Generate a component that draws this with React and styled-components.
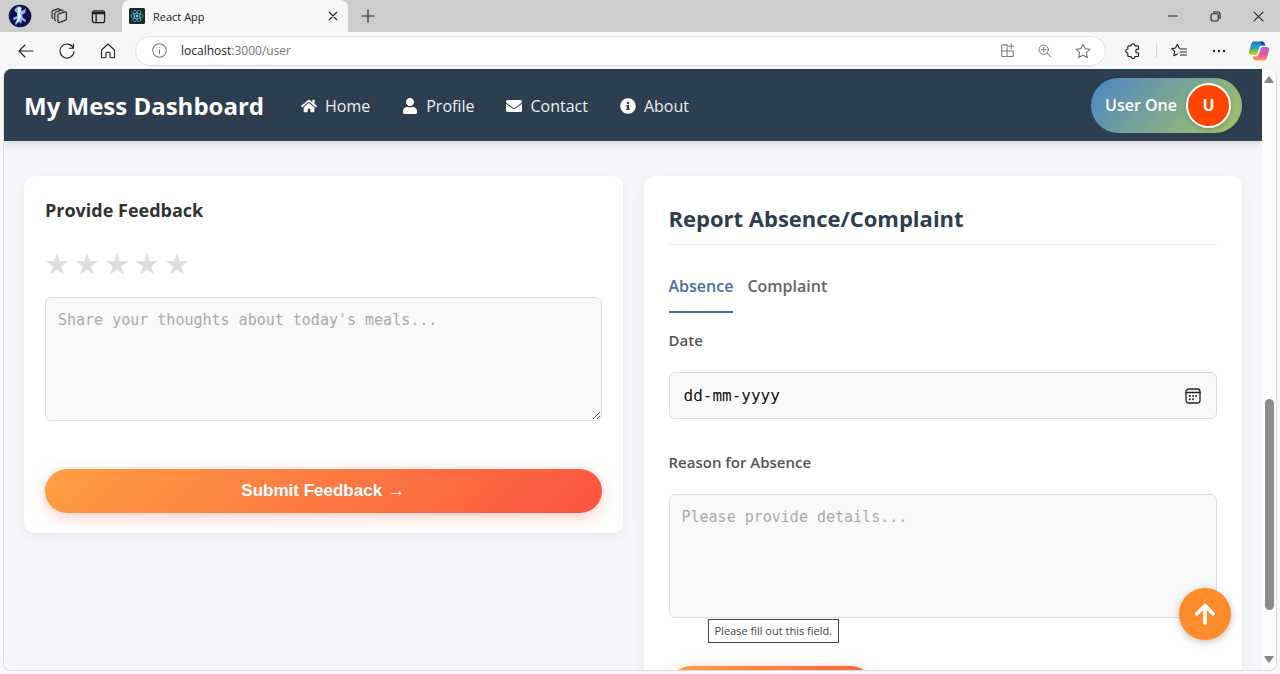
import React from "react";
import styled, { createGlobalStyle } from "styled-components";
import { FaHome, FaUser, FaEnvelope, FaInfoCircle, FaArrowUp } from "react-icons/fa";

const GlobalStyle = createGlobalStyle`
  *, *::before, *::after { box-sizing: border-box; }
  body {
    margin: 0;
    font-family: "Open Sans", "Noto Sans", sans-serif;
    font-size: 16px;
    color: #333;
    background: #f7f7f7;
  }
  button, input, textarea { font: inherit; color: inherit; margin: 0; }
  svg { display: block; flex: none; }
  h1, h2, h3 { margin: 0; }
`;

/* ---------- Browser window ---------- */

const Window = styled.div`
  display: flex;
  flex-direction: column;
  height: 100vh;
  overflow: hidden;
`;

const TabStrip = styled.div`
  display: flex;
  align-items: center;
  height: 32px;
  padding-left: 8px;
  background: #cdcdcd;
`;

const IconButton = styled.button`
  display: grid;
  place-items: center;
  flex: none;
  width: ${(p) => p.$width || 24}px;
  height: 24px;
  padding: 0;
  border: 0;
  background: none;
  color: ${(p) => (p.$muted ? "#777" : "#222")};
`;

const StripTools = styled.div`
  display: flex;
  gap: 15px;
  width: 114px;
  flex: none;
`;

const Tab = styled.div`
  display: flex;
  align-items: center;
  gap: 8px;
  width: 226px;
  height: 32px;
  padding: 0 5px 0 7px;
  border-radius: 8px 8px 0 0;
  background: #f7f7f7;
  font-size: 11px;
  color: #222;
`;

const TabTitle = styled.span`
  flex: 1;
`;

const WindowControls = styled.div`
  display: flex;
  margin-left: auto;
`;

const Toolbar = styled.div`
  display: flex;
  align-items: center;
  height: 37px;
  padding: 0 9px 0 14px;
  background: #f7f7f7;
`;

const ToolGroup = styled.div`
  display: flex;
  gap: 17px;
  margin-right: 15px;
`;

const AddressBar = styled.div`
  display: flex;
  flex: 1;
  align-items: center;
  height: 30px;
  padding: 0 10px 0 11px;
  border: 1px solid #e2e2e2;
  border-radius: 15px;
  background: #fff;
`;

const Address = styled.span`
  flex: 1;
  margin-left: 10px;
  font-size: 12px;
  color: #777;

  b {
    font-weight: 400;
    color: #222;
  }
`;

const AddressActions = styled.div`
  display: flex;
  gap: 14px;
`;

const ToolbarEnd = styled.div`
  display: flex;
  align-items: center;
  margin-left: 11px;
`;

const Divider = styled.span`
  width: 1px;
  height: 15px;
  margin: 0 10px 0 7px;
  background: #d8d8d8;
`;

const Viewport = styled.div`
  position: relative;
  display: flex;
  flex: 1;
  min-height: 0;
  margin: 0 3px 3px;
  border: 1px solid #dcdcdc;
  border-top: 0;
  border-radius: 8px;
  overflow: hidden;
  background: #fcfcfc;
`;

const ScrollTrack = styled.div`
  display: flex;
  flex-direction: column;
  align-items: center;
  width: 14px;
  padding: 7px 0;
  background: #fcfcfc;
`;

const ScrollThumb = styled.div`
  width: 9px;
  height: 36%;
  margin: auto 0 46px;
  border-radius: 5px;
  background: #8b8b8b;
`;

/* ---------- Page ---------- */

const Page = styled.div`
  flex: 1;
  min-width: 0;
  overflow: hidden;
  background: #f5f6fa;
`;

const NavBar = styled.header`
  display: flex;
  align-items: center;
  height: 72px;
  padding: 0 20px;
  background: #2c3e50;
  color: #fff;
  box-shadow: 0 2px 10px rgba(0, 0, 0, 0.15);
`;

const Brand = styled.h1`
  padding-top: 2px;
  font-size: 24px;
  font-weight: 700;
  line-height: 32px;
`;

const NavLinks = styled.nav`
  display: flex;
  gap: 32px;
  margin-left: 37px;
  padding-top: 2px;
`;

const NavLink = styled.a`
  display: flex;
  align-items: center;
  gap: 8px;
  font-size: 16px;
  color: #ecf0f1;
  text-decoration: none;

  svg { color: #fff; }
`;

const UserChip = styled.button`
  display: flex;
  align-items: center;
  gap: 9px;
  height: 55px;
  margin-left: auto;
  padding: 0 11px 0 14px;
  border: 0;
  border-radius: 28px;
  background: linear-gradient(135deg, #4a86c5, #a9c566);
  color: #fff;
  font-size: 16px;
  font-weight: 600;
`;

const Avatar = styled.span`
  display: grid;
  place-items: center;
  width: 45px;
  height: 45px;
  border: 2px solid #fff;
  border-radius: 50%;
  background: #ff4500;
  font-weight: 700;
  box-shadow: 0 2px 5px rgba(0, 0, 0, 0.2);
`;

const Columns = styled.main`
  display: grid;
  grid-template-columns: 1fr 1fr;
  align-items: start;
  gap: 21px;
  padding: 35px 20px 24px;
`;

const Card = styled.form`
  display: flex;
  flex-direction: column;
  align-items: stretch;
  padding: ${(p) => p.$padding};
  border-radius: 10px;
  background: #fff;
  box-shadow: 0 5px 15px rgba(0, 0, 0, 0.05);
`;

const FeedbackTitle = styled.h3`
  font-size: 18px;
  font-weight: 700;
  line-height: 28px;
`;

const Stars = styled.div`
  display: flex;
  gap: 6px;
  margin: 28px 0 21px;
`;

const StarButton = styled.button`
  display: grid;
  place-items: center;
  width: 24px;
  height: 24px;
  padding: 0;
  border: 0;
  background: none;
  color: #ddd;
`;

const TextArea = styled.textarea`
  display: block;
  width: 100%;
  height: 124px;
  padding: 12px;
  border: 1px solid #ddd;
  border-radius: 6px;
  background: #f9f9f9;
  font-family: "DejaVu Sans Mono", monospace;
  font-size: 15px;
  line-height: 20px;
  resize: ${(p) => (p.$resizable ? "vertical" : "none")};

  &::placeholder { color: #aaa; }
`;

const SubmitButton = styled.button`
  display: flex;
  align-items: center;
  justify-content: center;
  gap: 6px;
  width: ${(p) => (p.$compact ? "204px" : "100%")};
  height: 44px;
  margin-top: 48px;
  border: 0;
  border-radius: 22px;
  background: linear-gradient(135deg, #ff9f43, #fa5541);
  box-shadow: 0 4px 15px rgba(255, 87, 66, 0.3);
  color: #fff;
  font-family: "Liberation Sans", Arial, sans-serif;
  font-size: 17px;
  font-weight: 700;
  white-space: nowrap;
`;

const Arrow = styled.span`
  font-weight: 400;
`;

const ReportTitle = styled.h2`
  padding-bottom: 10px;
  border-bottom: 1px solid #eee;
  font-size: 22px;
  font-weight: 700;
  line-height: 32px;
  color: #2c3e50;
`;

const Tabs = styled.div`
  display: flex;
  gap: 14px;
  margin: 16px 0;
`;

const TabButton = styled.button`
  height: 52px;
  padding: 0;
  border: 0;
  border-bottom: 2px solid ${(p) => (p.$active ? "#4a6fa5" : "transparent")};
  background: none;
  color: ${(p) => (p.$active ? "#4a6fa5" : "#666")};
  font-size: 16px;
  font-weight: 600;
`;

const Field = styled.div`
  position: relative;
  display: flex;
  flex-direction: column;
  gap: 21px;
  margin-bottom: ${(p) => (p.$last ? 0 : 32)}px;
`;

const Label = styled.label`
  font-size: 15px;
  font-weight: 600;
  line-height: 22px;
  color: #555;
`;

const DateBox = styled.div`
  display: flex;
  align-items: center;
  height: 47px;
  padding: 0 11px 0 14px;
  border: 1px solid #ddd;
  border-radius: 6px;
  background: #f9f9f9;
`;

const DateInput = styled.input`
  flex: 1;
  min-width: 0;
  padding: 0;
  border: 0;
  background: none;
  font-family: "DejaVu Sans Mono", monospace;
  font-size: 16px;

  &::placeholder { color: #111; opacity: 1; }
`;

const Tooltip = styled.div`
  position: absolute;
  top: calc(100% + 1px);
  left: 39px;
  padding: 3px 6px;
  border: 1px solid #444;
  background: #fff;
  font-size: 11px;
  line-height: 16px;
  color: #444;
  white-space: nowrap;
`;

const TopButton = styled.button`
  position: absolute;
  right: 45px;
  bottom: 30px;
  display: grid;
  place-items: center;
  width: 52px;
  height: 52px;
  padding: 0;
  border: 0;
  border-radius: 50%;
  background: #ff8c2a;
  color: #fff;
  box-shadow: 0 2px 8px rgba(0, 0, 0, 0.25);
`;

/* ---------- Drawings ---------- */

const Line = ({ size = 16, width = 1.1, children }) => (
  <svg width={size} height={size} viewBox="0 0 16 16" fill="none" stroke="currentColor"
    strokeWidth={width} strokeLinecap="round" strokeLinejoin="round" aria-hidden="true">
    {children}
  </svg>
);

const ProfilePicture = () => (
  <svg width="24" height="24" viewBox="0 0 24 24" aria-hidden="true">
    <circle cx="12" cy="12" r="11.3" fill="#12124f" />
    <path d="M8 4l3-2 3 2-1 3 3-1 2-2-1 5-3 2 1 3 3 2-1 2-3-2-1 4-2-3-3 4-1-1 2-5-3 1-1-2 4-2V9L6 6z" fill="#86bdf5" />
    <path d="M10 4l2-1 1 3-1 4 2 3-2 1-1 4-2 1 1-6z" fill="#eef8ff" />
  </svg>
);

const ReactLogo = () => (
  <svg width="16" height="16" viewBox="0 0 16 16" aria-hidden="true">
    <rect width="16" height="16" rx="1.5" fill="#20282d" />
    <g fill="none" stroke="#4fb3cc" strokeWidth=".8">
      <ellipse cx="8" cy="8" rx="6.3" ry="2.5" />
      <ellipse cx="8" cy="8" rx="6.3" ry="2.5" transform="rotate(60 8 8)" />
      <ellipse cx="8" cy="8" rx="6.3" ry="2.5" transform="rotate(120 8 8)" />
    </g>
    <circle cx="8" cy="8" r="1.3" fill="#61dafb" />
  </svg>
);

const CopilotLogo = () => (
  <svg width="22" height="22" viewBox="0 0 22 22" aria-hidden="true">
    <defs>
      <linearGradient id="copilotLeft" x1="0" y1="0" x2="0" y2="1">
        <stop offset="0" stopColor="#1b6fdc" />
        <stop offset=".45" stopColor="#20a5b8" />
        <stop offset=".75" stopColor="#8cc540" />
        <stop offset="1" stopColor="#f4c51c" />
      </linearGradient>
      <linearGradient id="copilotRight" x1="0" y1="0" x2="0" y2="1">
        <stop offset="0" stopColor="#a26be8" />
        <stop offset=".5" stopColor="#e8559b" />
        <stop offset="1" stopColor="#fb9a50" />
      </linearGradient>
    </defs>
    <path d="M6 1.5h8c1.6 0 2.3 1 2.7 2.4l.5 1.6h-3.4c-1.6 0-2.2 1-2.6 2.2L9.500 13c-.5 1.5-1.400 2-2.700 2H3.500C1.200 15 .5 13.500 1 11.500l2.200-7.500C3.700 2.300 4.500 1.500 6 1.500z" fill="url(#copilotLeft)" />
    <path d="M16 20.500H8c-1.600 0-2.300-1-2.700-2.400L4.800 16.500h3.400c1.600 0 2.200-1 2.600-2.200L12.500 9c.5-1.500 1.400-2 2.700-2h3.300c2.300 0 3 1.500 2.500 3.500l-2.200 7.500c-.5 1.700-1.300 2.500-2.800 2.500z" fill="url(#copilotRight)" />
    <path d="M12 1.500h2c1.600 0 2.300 1 2.700 2.400l.5 1.600h-3.400z" fill="#1744a8" />
  </svg>
);

const Star = () => (
  <svg width="22" height="22" viewBox="0 0 22 22" fill="currentColor" aria-hidden="true">
    <path d="M11 0l2.600 8.200H22l-6.800 5 2.600 8.300L11 16.400l-6.800 5.100 2.600-8.300L0 8.200h8.400z" />
  </svg>
);

const Triangle = ({ down }) => (
  <svg width="10" height="7" viewBox="0 0 10 7" fill="#858585" aria-hidden="true">
    <path d={down ? "M1 0h8q1 0 .5 1L5.500 6.500q-.5.600-1 0L.5 1Q0 0 1 0z" : "M1 7h8q1 0 .5-1L5.500.5q-.5-.600-1 0L.5 6Q0 7 1 7z"} />
  </svg>
);

const STAR_PATH = "M8 1.200l2.100 4.400 4.800.7-3.500 3.400.9 4.800L8 12.200l-4.300 2.300.9-4.800L1.100 6.300l4.800-.7z";

const navItems = [
  { label: "Home", Icon: FaHome },
  { label: "Profile", Icon: FaUser },
  { label: "Contact", Icon: FaEnvelope },
  { label: "About", Icon: FaInfoCircle },
];

function BrowserChrome() {
  return (
    <>
      <TabStrip>
        <StripTools>
          <IconButton aria-label="Profile"><ProfilePicture /></IconButton>
          <IconButton aria-label="Workspaces">
            <Line size={17}>
              <path d="M7 5.500l5.800-1.800q1.700-.4 1.700 1.300v5q0 1.200-1.200 1.600l-5 1.900q-1.800.600-1.800-1.200V7q0-1.100.5-1.500z" />
              <path d="M4.300 11.800q-.8-.2-.8-1.300V5.300q0-1.200 1.200-1.600L9.500 2q1.300-.4 1.900.6M1.700 9.800Q1 9.500 1 8.500V3.800q0-1.200 1.200-1.600L6.500.8q1.300-.3 1.900.5" />
            </Line>
          </IconButton>
          <IconButton aria-label="Tab actions">
            <Line size={15} width={1.4}>
              <rect x="1.5" y="2" width="13" height="12.5" rx="2" />
              <path d="M2 3.500h12M2 5h12M5.500 5v9" />
            </Line>
          </IconButton>
        </StripTools>
        <Tab>
          <ReactLogo />
          <TabTitle>React App</TabTitle>
          <IconButton aria-label="Close tab" $width={20}>
            <Line size={10} width={1.8}><path d="M2 2l12 12M14 2L2 14" /></Line>
          </IconButton>
        </Tab>
        <IconButton aria-label="New tab" $width={40}>
          <Line size={14} width={1.3}><path d="M8 1v14M1 8h14" /></Line>
        </IconButton>
        <WindowControls>
          <IconButton aria-label="Minimize" $width={43}>
            <Line size={10} width={1.8}><path d="M1 8h14" /></Line>
          </IconButton>
          <IconButton aria-label="Restore" $width={43}>
            <Line size={11} width={1.6}>
              <rect x="1.5" y="4" width="10.5" height="10.5" rx="2" />
              <path d="M5 1.500h6.500q3 0 3 3V11" />
            </Line>
          </IconButton>
          <IconButton aria-label="Close window" $width={43}>
            <Line size={11} width={1.6}><path d="M1.500 1.500l13 13M14.500 1.500l-13 13" /></Line>
          </IconButton>
        </WindowControls>
      </TabStrip>
      <Toolbar>
        <ToolGroup>
          <IconButton aria-label="Back">
            <Line><path d="M15 8H1M7 2L1 8l6 6" /></Line>
          </IconButton>
          <IconButton aria-label="Refresh">
            <Line><path d="M14.300 5A7 7 0 1 0 15 8.500M14.500 1v4.200h-4.200" /></Line>
          </IconButton>
          <IconButton aria-label="Home">
            <Line><path d="M1.500 7L8 1l6.500 6v7q0 .8-.8.8h-2.900q-.8 0-.8-.8V10q0-.8-.8-.8H6.800Q6 9.200 6 10v4q0 .8-.8.8H2.300q-.8 0-.8-.8z" /></Line>
          </IconButton>
        </ToolGroup>
        <AddressBar>
          <IconButton aria-label="Site information" $muted>
            <Line size={15}><circle cx="8" cy="8" r="7.2" /><path d="M8 7.200v4M8 4.700v.1" /></Line>
          </IconButton>
          <Address><b>localhost</b>:3000/user</Address>
          <AddressActions>
            <IconButton aria-label="Install app" $muted>
              <Line size={15}><path d="M7.500 2H2.800q-1 0-1 1v10.500q0 1 1 1h10.400q1 0 1-1V8.500H1.800M7.500 2v12.500M12 .8v5.400M9.300 3.500h5.400" /></Line>
            </IconButton>
            <IconButton aria-label="Zoom" $muted>
              <Line size={14}><circle cx="6.5" cy="6.5" r="5.3" /><path d="M10.500 10.500L15 15M6.500 4v5M4 6.500h5" /></Line>
            </IconButton>
            <IconButton aria-label="Add to favorites" $muted>
              <Line><path d={STAR_PATH} /></Line>
            </IconButton>
          </AddressActions>
        </AddressBar>
        <ToolbarEnd>
          <IconButton aria-label="Extensions" $width={32}>
            <Line width={1.2}><path d="M6 2.800a2 2 0 0 1 4 0h2.500q1 0 1 1v2.400h-.8a1.900 1.900 0 0 0 0 3.800h.8v2.500q0 1-1 1H10a2 2 0 0 1-4 0H3.800q-1 0-1-1V10a2 2 0 0 1 0-4V3.800q0-1 1-1z" /></Line>
          </IconButton>
          <Divider />
          <IconButton aria-label="Favorites">
            <Line><path d="M8.800 5.200h-.6L6.400 1.200 4.500 5 .8 5.600l2.800 2.800-.7 4.400 3.500-1.900M9.500 6h6M9 9h6.500M9.500 12h6" /></Line>
          </IconButton>
          <IconButton aria-label="More" $width={56}>
            <svg width="14" height="4" viewBox="0 0 14 4" fill="currentColor"><circle cx="2" cy="2" r="1.2" /><circle cx="7" cy="2" r="1.2" /><circle cx="12" cy="2" r="1.2" /></svg>
          </IconButton>
          <IconButton aria-label="Copilot"><CopilotLogo /></IconButton>
        </ToolbarEnd>
      </Toolbar>
    </>
  );
}

function FeedbackCard() {
  return (
    <Card $padding="20px 21px" onSubmit={(e) => e.preventDefault()}>
      <FeedbackTitle>Provide Feedback</FeedbackTitle>
      <Stars role="group" aria-label="Rating">
        {[1, 2, 3, 4, 5].map((n) => (
          <StarButton key={n} type="button" aria-label={`${n} stars`}><Star /></StarButton>
        ))}
      </Stars>
      <TextArea $resizable aria-label="Feedback" placeholder="Share your thoughts about today's meals..." />
      <SubmitButton type="submit">Submit Feedback <Arrow>→</Arrow></SubmitButton>
    </Card>
  );
}

function ReportCard() {
  return (
    <Card $padding="26px 25px" onSubmit={(e) => e.preventDefault()}>
      <ReportTitle>Report Absence/Complaint</ReportTitle>
      <Tabs role="tablist">
        <TabButton type="button" role="tab" aria-selected="true" $active>Absence</TabButton>
        <TabButton type="button" role="tab" aria-selected="false">Complaint</TabButton>
      </Tabs>
      <Field>
        <Label htmlFor="date">Date</Label>
        <DateBox>
          <DateInput id="date" placeholder="dd-mm-yyyy" required />
          <IconButton type="button" aria-label="Open calendar">
            <Line width={1.3}>
              <rect x="1" y="1" width="14" height="14" rx="2.5" />
              <path d="M1 4.500h14" />
              <path d="M4.800 8h.1M8 8h.1M11.200 8h.1M4.800 11.300h.1M8 11.300h.1" strokeWidth="1.9" />
            </Line>
          </IconButton>
        </DateBox>
      </Field>
      <Field $last>
        <Label htmlFor="reason">Reason for Absence</Label>
        <TextArea id="reason" placeholder="Please provide details..." required />
        <Tooltip role="tooltip">Please fill out this field.</Tooltip>
      </Field>
      <SubmitButton type="submit" $compact aria-label="Submit" />
    </Card>
  );
}

export default function App() {
  return (
    <Window>
      <GlobalStyle />
      <BrowserChrome />
      <Viewport>
        <Page>
          <NavBar>
            <Brand>My Mess Dashboard</Brand>
            <NavLinks>
              {navItems.map(({ label, Icon }) => (
                <NavLink key={label} href="#"><Icon size={16} />{label}</NavLink>
              ))}
            </NavLinks>
            <UserChip>User One<Avatar>U</Avatar></UserChip>
          </NavBar>
          <Columns>
            <FeedbackCard />
            <ReportCard />
          </Columns>
        </Page>
        <ScrollTrack aria-hidden="true">
          <Triangle />
          <ScrollThumb />
          <Triangle down />
        </ScrollTrack>
        <TopButton aria-label="Back to top"><FaArrowUp size={24} /></TopButton>
      </Viewport>
    </Window>
  );
}
